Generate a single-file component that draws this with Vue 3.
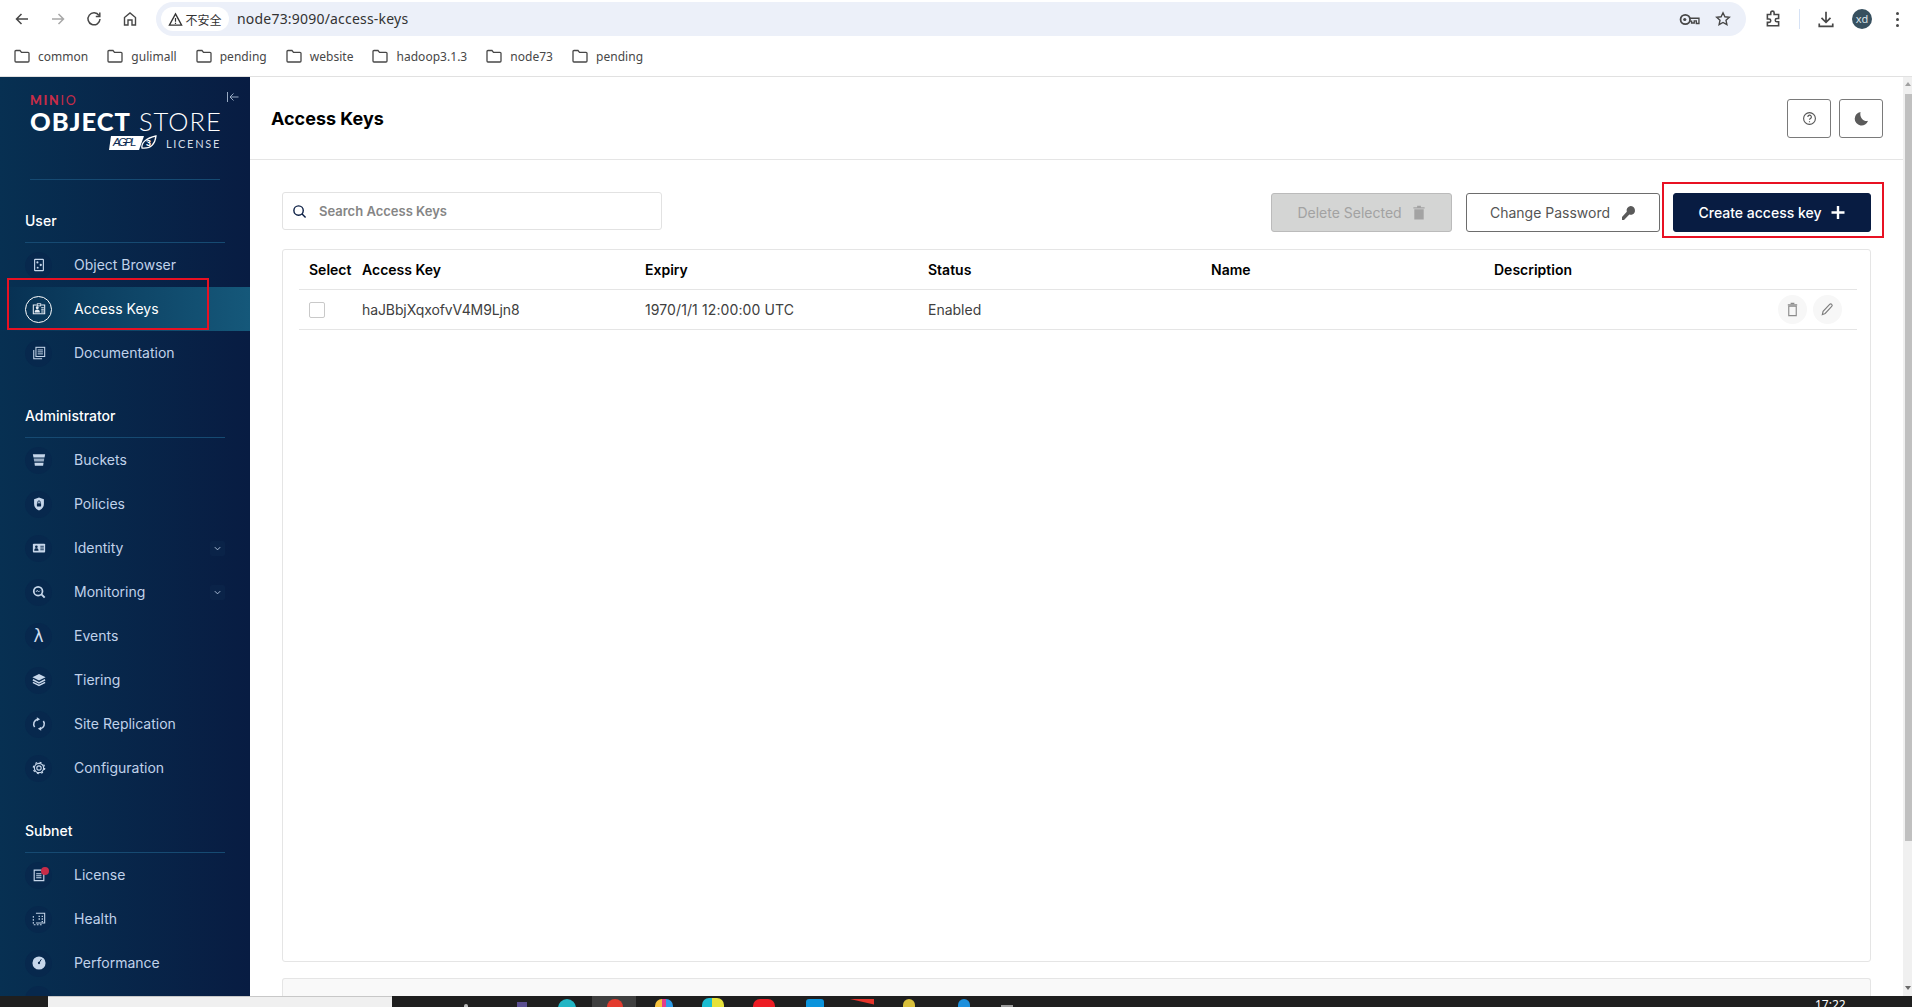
<script setup>
const bookmarks = ['common', 'gulimall', 'pending', 'website', 'hadoop3.1.3', 'node73', 'pending']

const I = {
  browser: '<rect x="3" y="1.5" width="10" height="13" rx=".6" fill="none" stroke="currentColor" stroke-width="1.3"/><circle cx="6.2" cy="5" r="1.2" fill="currentColor"/><circle cx="10" cy="8" r="1.3" fill="currentColor"/><circle cx="6.5" cy="11" r="1.1" fill="currentColor"/>',
  keys: '<path d="M5.5 3.5H1.5v10h13v-10h-4" fill="none" stroke="currentColor" stroke-width="1.2"/><circle cx="6" cy="6.6" r="1.7" fill="currentColor"/><path d="M3 12c0-2.6 1.2-3.4 3-3.4s3 .8 3 3.4z" fill="currentColor"/><path d="M10.5 6.5h3M10.5 9h3M10.5 11.4h3" stroke="currentColor" stroke-width="1.2"/><rect x="6" y="2" width="4" height="2.4" fill="none" stroke="currentColor"/>',
  docs: '<path d="M2 4.5v10h9.5" fill="none" stroke="currentColor" stroke-width="1.2"/><rect x="4.5" y="1.5" width="10" height="10.5" fill="none" stroke="currentColor" stroke-width="1.2"/><path d="M6.5 4.5h6M6.5 6.7h6M6.5 9h6" stroke="currentColor" stroke-width="1.1"/>',
  buckets: '<path d="M1 1.500h14l-.7 3.600H1.700z" fill="currentColor"/><path d="M2 6.300h12l-.5 3.400H2.500z" fill="currentColor" opacity=".75"/><path d="M2.800 11h10.400l-.5 3.500H3.300z" fill="currentColor"/>',
  policies: '<path d="M8 .5l5.600 2.200v5.300c0 3.600-2.600 6.200-5.600 7.500-3-1.300-5.600-3.900-5.600-7.500V2.700z" fill="currentColor"/><rect x="5.600" y="7" width="4.800" height="3.800" rx=".5" fill="#06264a"/><path d="M6.600 7V5.800a1.400 1.400 0 0 1 2.800 0V7" fill="none" stroke="#06264a"/>',
  identity: '<rect x="1" y="3" width="14" height="10" rx="1" fill="currentColor"/><circle cx="5" cy="6.500" r="1.500" fill="#06264a"/><path d="M2.500 11c0-2 1.100-2.700 2.500-2.700s2.500.7 2.500 2.700z" fill="#06264a"/><path d="M9.500 6h4M9.500 8h4M9.500 10h4" stroke="#06264a"/>',
  monitoring: '<circle cx="7" cy="7" r="5" fill="none" stroke="currentColor" stroke-width="2"/><path d="M10.500 10.500l4 4" stroke="currentColor" stroke-width="2.200"/><path d="M4.500 8l1.500-2 1.500 2 1.500-1.500" fill="none" stroke="currentColor"/>',
  tiering: '<path d="M8 1l7.500 3.800L8 8.600.5 4.800z" fill="currentColor"/><path d="M1 7.700l7 3.500 7-3.500" fill="none" stroke="currentColor" stroke-width="1.700"/><path d="M1 10.800l7 3.500 7-3.500" fill="none" stroke="currentColor" stroke-width="1.700"/>',
  replication: '<path d="M3 11.500A5.800 5.800 0 0 1 6.500 2.500M13 4.500a5.800 5.800 0 0 1-3.500 9" fill="none" stroke="currentColor" stroke-width="1.800"/><path d="M5.500 .3l3.800 2.200-3.800 2.400zM10.500 15.700l-3.800-2.200 3.800-2.400z" fill="currentColor"/>',
  config: '<circle cx="8" cy="8" r="5.300" fill="none" stroke="currentColor" stroke-width="1.300"/><circle cx="8" cy="8" r="6.500" fill="none" stroke="currentColor" stroke-width="1.400" stroke-dasharray="2.200 2.900"/><circle cx="8" cy="8" r="2.500" fill="none" stroke="currentColor" stroke-width="1.300"/>',
  license: '<path d="M2.500 2.500h8l3 3v9h-11z" fill="none" stroke="currentColor" stroke-width="1.300"/><path d="M4.800 6.500h6M4.800 8.800h6M4.800 11.100h6" stroke="currentColor" stroke-width="1.200"/>',
  health: '<path d="M4.500 1.500h10v11h-10" fill="none" stroke="currentColor" stroke-width="1.200"/><path d="M1.500 4.500v10h11" fill="none" stroke="currentColor" stroke-width="1.200" stroke-dasharray="2 1.500"/><path d="M7.500 5h1.500M11 5h1.500M7.500 8h1.500M11 8h1.500M11 11h1.500" stroke="currentColor" stroke-width="1.500"/>',
  performance: '<circle cx="8" cy="8" r="7.500" fill="currentColor"/><circle cx="8" cy="8" r="1.300" fill="#06264a"/><path d="M8.500 7l2.200-3.300" stroke="#06264a" stroke-width="1.100"/>'
}

const sections = [
  { title: 'User', items: [
    { label: 'Object Browser', icon: I.browser },
    { label: 'Access Keys', icon: I.keys, active: true },
    { label: 'Documentation', icon: I.docs }
  ] },
  { title: 'Administrator', items: [
    { label: 'Buckets', icon: I.buckets },
    { label: 'Policies', icon: I.policies },
    { label: 'Identity', icon: I.identity, more: true },
    { label: 'Monitoring', icon: I.monitoring, more: true },
    { label: 'Events', glyph: 'λ' },
    { label: 'Tiering', icon: I.tiering },
    { label: 'Site Replication', icon: I.replication },
    { label: 'Configuration', icon: I.config }
  ] },
  { title: 'Subnet', items: [
    { label: 'License', icon: I.license, dot: true },
    { label: 'Health', icon: I.health },
    { label: 'Performance', icon: I.performance }
  ] }
]

const columns = ['Access Key', 'Expiry', 'Status', 'Name', 'Description']
const row = ['haJBbjXqxofvV4M9Ljn8', '1970/1/1 12:00:00 UTC', 'Enabled', '', '']
const taskIcons = ['arrow', 'purple', 'teal', 'current', 'multi', 'multi2', 'red', 'blue', 'wedge', 'yellow', 'drop', 'gray']
</script>

<template>
  <div class="screen">
    <header class="chrome">
      <div class="toolbar">
        <div class="nav">
          <svg class="cicon" viewBox="0 0 16 16"><path d="M14 8H3M7.500 3L2.500 8l5 5" fill="none" stroke="#474747" stroke-width="1.500"/></svg>
          <svg class="cicon" viewBox="0 0 16 16"><path d="M2 8h11M8.500 3l5 5-5 5" fill="none" stroke="#a8a8a8" stroke-width="1.500"/></svg>
          <svg class="cicon" viewBox="0 0 16 16"><path d="M13 4.500A6 6 0 1 0 14 8" fill="none" stroke="#474747" stroke-width="1.500"/><path d="M13.800 1.500v4h-4" fill="none" stroke="#474747" stroke-width="1.500"/></svg>
          <svg class="cicon" viewBox="0 0 16 16"><path d="M2.500 14V6.500L8 2l5.500 4.500V14h-3.500V9H6v5z" fill="none" stroke="#474747" stroke-width="1.400"/></svg>
        </div>
        <div class="address">
          <div class="secure">
            <svg class="warn" viewBox="0 0 16 16"><path d="M8 2l6.500 12h-13z" fill="none" stroke="#333" stroke-width="1.400"/><path d="M8 6.500v4M8 11.500v1.200" stroke="#333" stroke-width="1.300"/></svg>
            <span>不安全</span>
          </div>
          <span class="url">node73:9090/access-keys</span>
          <div class="addr-end">
            <svg class="cicon key" viewBox="0 0 20 16"><circle cx="6" cy="8" r="4.500" fill="none" stroke="#474747" stroke-width="1.700"/><circle cx="5.500" cy="8" r="1.500" fill="#474747"/><path d="M10.500 6.800h8.500v5h-2.500v-2.500h-2v2h-2.500V9.500h-1.500" fill="none" stroke="#474747" stroke-width="1.300"/></svg>
            <svg class="cicon" viewBox="0 0 16 16"><path d="M8 1.800l1.900 4 4.400.5-3.300 3 .9 4.400L8 11.500l-3.900 2.200.9-4.400-3.300-3 4.400-.5z" fill="none" stroke="#474747" stroke-width="1.400"/></svg>
          </div>
        </div>
        <div class="tools">
          <svg class="cicon" viewBox="0 0 16 16"><path d="M3 4h3V2.500a1.500 1.500 0 0 1 3 0V4h4v3.500h-1.500a1.500 1.500 0 0 0 0 3H13V14H3v-3h1.500a1.500 1.500 0 0 0 0-3H3z" fill="none" stroke="#474747" stroke-width="1.400"/></svg>
          <span class="tool-sep"></span>
          <svg class="cicon" viewBox="0 0 16 16"><path d="M8 1.500v9M4 7l4 4 4-4M2 12v2.500h12V12" fill="none" stroke="#474747" stroke-width="1.500"/></svg>
          <span class="avatar">xd</span>
          <span class="dots"><i></i><i></i><i></i></span>
        </div>
      </div>
      <div class="bookmarks">
        <div v-for="(b, i) in bookmarks" :key="i" class="bookmark">
          <svg class="folder" viewBox="0 0 16 14"><path d="M1 2.500A1 1 0 0 1 2 1.500h4l1.500 1.800H14a1 1 0 0 1 1 1V12a1 1 0 0 1-1 1H2a1 1 0 0 1-1-1z" fill="none" stroke="#474747" stroke-width="1.300"/></svg>
          <span>{{ b }}</span>
        </div>
      </div>
    </header>

    <div class="page">
      <aside class="sidebar">
        <div class="brand">
          <div class="logo">
            <div class="minio"><b>MIN</b>IO</div>
            <div class="store"><b>OBJECT</b> STORE</div>
            <div class="lic">
              <svg class="agpl" viewBox="0 0 48 16">
                <path d="M2 1h33L30 15H0z" fill="#fff"/>
                <text x="4" y="11" font-family="Liberation Sans, sans-serif" font-style="italic" font-size="11" fill="#0a2a50" textLength="25">AGPL</text>
                <path d="M33 13c-1-5 4-10 14-12-1 8-5 13-14 12z" fill="none" stroke="#fff" stroke-width="1.300"/>
                <text x="37" y="11" font-family="Liberation Sans, sans-serif" font-weight="700" font-size="9" fill="#fff">3</text>
              </svg>
              <span>LICENSE</span>
            </div>
          </div>
          <svg class="collapse" viewBox="0 0 12 10"><path d="M.5 0v10M11.500 5H3M6.500 1.500L3 5l3.500 3.500" fill="none" stroke="#a9bad0" stroke-width=".9"/></svg>
        </div>

        <section v-for="s in sections" :key="s.title" class="group">
          <h3>{{ s.title }}</h3>
          <div v-for="item in s.items" :key="item.label" class="nav-row" :class="{ active: item.active }">
            <span class="ic">
              <svg v-if="item.icon" viewBox="0 0 16 16" v-html="item.icon"></svg>
              <span v-else class="lambda">{{ item.glyph }}</span>
              <i v-if="item.dot" class="dot"></i>
            </span>
            <span class="lbl">{{ item.label }}</span>
            <span v-if="item.more" class="more">
              <svg viewBox="0 0 10 10"><path d="M2 3.500l3 3 3-3" fill="none" stroke="#b9cbe3" stroke-width="1"/></svg>
            </span>
            <i v-if="item.active" class="mark mark-side"></i>
          </div>
        </section>
        <div class="nav-row clipped"><span class="ic"></span></div>
      </aside>

      <main class="content">
        <div class="head">
          <h1>Access Keys</h1>
          <div class="head-btns">
            <button class="sq">
              <svg viewBox="0 0 16 16"><circle cx="8" cy="8" r="6.300" fill="none" stroke="#555" stroke-width="1.200"/><path d="M6.200 6.300a1.900 1.900 0 1 1 2.800 1.700c-.7.400-1 .7-1 1.400M8 10.800v1.200" fill="none" stroke="#555" stroke-width="1.200"/></svg>
            </button>
            <button class="sq">
              <svg viewBox="0 0 16 16"><path d="M7 1a7.300 7.300 0 1 0 8 9.500C10.500 12 5.500 7 7 1z" fill="#5b5b5b"/></svg>
            </button>
          </div>
        </div>

        <div class="body">
          <div class="actions">
            <label class="search">
              <svg viewBox="0 0 16 16"><circle cx="7" cy="7" r="5" fill="none" stroke="#081c42" stroke-width="1.500"/><path d="M10.700 10.700L14.500 14.500" stroke="#081c42" stroke-width="1.500"/></svg>
              <span>Search Access Keys</span>
            </label>
            <div class="btns">
              <button class="btn disabled">Delete Selected
                <svg viewBox="0 0 14 16"><path d="M2 4.500h10V15.500H2zM1 2.300h12v1.300H1zM5 .8h4v1.500H5z" fill="#a3a3a3"/></svg>
              </button>
              <button class="btn outline">Change Password
                <svg class="pw" viewBox="0 0 16 16"><path d="M10.500 1a4.500 4.500 0 0 1 1.800 8.600 4.500 4.500 0 0 1-3-.2L4 15H2v-3l4.800-5.200A4.500 4.500 0 0 1 10.500 1z" fill="#5a5a5a"/></svg>
              </button>
              <button class="btn primary">Create access key
                <svg viewBox="0 0 14 14"><path d="M7 .5v13M.5 7h13" stroke="#fff" stroke-width="2.400"/></svg>
                <i class="mark mark-create"></i>
              </button>
            </div>
          </div>

          <div class="panel">
            <div class="t-row t-head">
              <div class="c-sel">Select</div>
              <div v-for="c in columns" :key="c" class="cell">{{ c }}</div>
            </div>
            <div class="t-row t-data">
              <div class="c-sel"><span class="check"></span></div>
              <div v-for="(c, i) in row" :key="i" class="cell">{{ c }}</div>
              <div class="row-btns">
                <span class="round"><svg viewBox="0 0 14 16"><path d="M3 4.500h8V14.500H3zM2 3h10M5 1.500h4" fill="none" stroke="#8b8b8b" stroke-width="1.200"/></svg></span>
                <span class="round"><svg viewBox="0 0 16 16"><path d="M2.500 13.500l.8-3.500 7-7.500a1.500 1.500 0 0 1 2.200 2.200l-7 7.500z" fill="none" stroke="#7d7d7d" stroke-width="1.200"/></svg></span>
              </div>
            </div>
          </div>
          <div class="panel-next"></div>
        </div>
      </main>

      <div class="scrollbar">
        <span class="arrow-up"></span>
        <span class="thumb"></span>
        <span class="arrow-down"></span>
      </div>
    </div>

    <footer class="taskbar">
      <span class="task-search"></span>
      <span v-for="t in taskIcons" :key="t" class="task" :class="t"></span>
      <span class="clock">17:22</span>
    </footer>
  </div>
</template>

<style>
html, body { margin: 0; overflow: hidden; background: #fff; }
</style>

<style scoped>
.screen { width: 1912px; height: 1007px; display: flex; flex-direction: column; overflow: hidden; font-family: Inter, "Liberation Sans", sans-serif; font-size: 14px; color: #404040; }
.chrome { height: 77px; box-sizing: border-box; border-bottom: 1px solid #e1e1e1; flex: none; background: #fff; }
.toolbar { height: 38px; display: flex; align-items: center; box-sizing: border-box; }
.nav { width: 156px; padding-left: 14px; padding-bottom: 1px; box-sizing: border-box; display: flex; gap: 20px; flex: none; }
.cicon { width: 16px; height: 16px; display: block; }
.address { width: 1590px; height: 34px; border-radius: 17px; background: #ecf0f9; display: flex; align-items: center; box-sizing: border-box; padding: 0 15px 0 5px; flex: none; }
.secure { width: 68px; height: 24px; border-radius: 12px; background: #fff; display: flex; align-items: center; justify-content: center; gap: 2px; font: 12px "Noto Sans CJK SC", sans-serif; color: #333; flex: none; }
.warn { width: 15px; height: 15px; }
.url { margin-left: 8px; padding-bottom: 1px; font: 14px "Noto Sans", sans-serif; color: #333; letter-spacing: .2px; }
.addr-end { margin-left: auto; display: flex; gap: 15px; align-items: center; }
.addr-end .key { width: 21px; height: 17px; }
.tools { display: flex; align-items: center; flex: 1; padding-left: 18px; }
.tools .cicon { width: 18px; height: 18px; }
.tool-sep { width: 1px; height: 20px; background: #d6e2f5; margin: 0 17px; }
.avatar { width: 20px; height: 20px; border-radius: 50%; background: #37505f; color: #dbe4ea; font: 11px/20px "Noto Sans", sans-serif; text-align: center; margin-left: 17px; }
.dots { display: flex; flex-direction: column; gap: 3px; margin-left: 24px; }
.dots i { width: 3px; height: 3px; border-radius: 50%; background: #474747; display: block; }
.bookmarks { height: 38px; box-sizing: border-box; display: flex; align-items: center; padding: 0 0 2px 14px; gap: 19px; }
.bookmark { display: flex; align-items: center; gap: 8px; font: 12px "Noto Sans", sans-serif; letter-spacing: .03px; color: #474747; }
.folder { width: 16px; height: 14px; }

.page { flex: 1; min-height: 0; display: flex; }
.sidebar { width: 250px; flex: none; overflow: hidden; background: linear-gradient(90deg, #073052 0%, #081c42 100%); position: relative; }
.brand { height: 102px; margin: 0 30px; border-bottom: 1px solid #164a72; position: relative; }
.logo { padding-top: 19px; width: 190px; color: #fff; font-family: Lato, sans-serif; }
.minio { color: #c72c48; font-size: 12.500px; line-height: 9px; letter-spacing: 1.700px; font-weight: 400; }
.minio b { font-weight: 900; }
.store { font-size: 25.500px; line-height: 26px; font-weight: 300; letter-spacing: 1px; white-space: nowrap; margin-top: 3px; }
.store b { font-weight: 900; }
.lic { display: flex; justify-content: flex-end; align-items: center; gap: 9px; margin-top: 1px; font-size: 11px; letter-spacing: 1.700px; color: #d4dce8; margin-right: -1px; }
.agpl { width: 48px; height: 16px; }
.collapse { position: absolute; left: 197px; top: 15px; width: 12px; height: 10px; }

.group h3 { margin: 0 25px; padding: 32px 0 13px; height: 17px; box-sizing: content-box; font-size: 14px; line-height: 17px; font-weight: 500; color: #fff; border-bottom: 1px solid #164a72; }
.nav-row { height: 44px; display: flex; align-items: center; padding: 0 25px; position: relative; }
.nav-row.active { background: linear-gradient(90deg, #073052 0%, #15587a 100%); }
.ic { width: 27px; height: 27px; border-radius: 50%; background: #07284d; color: #c6d6ea; display: flex; align-items: center; justify-content: center; position: relative; flex: none; box-sizing: border-box; }
.ic svg { width: 14px; height: 14px; display: block; }
.active .ic { background: transparent; border: 1px solid #fff; color: #e6edf5; }
.lambda { font: 17px/1 "DejaVu Sans", sans-serif; color: #d0ddee; }
.dot { position: absolute; top: 5px; right: 3px; width: 8px; height: 8px; border-radius: 50%; background: #c72c48; }
.lbl { margin-left: 22px; padding-bottom: 2px; font-weight: 400; color: #c0d2ea; font-size: 14px; }
.active .lbl { color: #fff; }
.more { margin-left: auto; width: 15px; height: 15px; background: #0a2348; border-radius: 2px; display: flex; align-items: center; justify-content: center; }
.more svg { width: 9px; height: 9px; }
.mark { position: absolute; border: 2px solid #e81123; box-sizing: border-box; pointer-events: none; }
.mark-side { left: 7px; top: -9px; width: 202px; height: 52px; }
.mark-create { left: -12px; top: -12px; width: 222px; height: 56px; }
.clipped { margin-top: -8px; }

.content { flex: 1; min-width: 0; display: flex; flex-direction: column; }
.head { height: 83px; box-sizing: border-box; border-bottom: 1px solid #e5e5e5; display: flex; align-items: center; justify-content: space-between; padding: 0 20px 0 21px; flex: none; }
h1 { margin: 0; font-size: 18px; font-weight: 700; color: #000; }
.head-btns { display: flex; gap: 8px; }
.sq { width: 44px; height: 39px; border: 1px solid #7a7a7a; border-radius: 3px; background: #fff; display: flex; align-items: center; justify-content: center; padding: 0; }
.sq svg { width: 15px; height: 15px; }
.body { flex: 1; min-height: 0; padding: 32px 32px 0; display: flex; flex-direction: column; overflow: hidden; }
.actions { display: flex; justify-content: space-between; align-items: center; height: 40px; flex: none; }
.search { width: 380px; height: 38px; box-sizing: border-box; border: 1px solid #e2e2e2; border-radius: 3px; display: flex; align-items: center; padding-left: 9px; gap: 12px; font-size: 13px; font-weight: 600; color: #858585; margin-top: -2px; }
.search svg { width: 15px; height: 15px; }
.btns { display: flex; gap: 13px; margin-top: 1px; }
.btn { height: 39px; box-sizing: border-box; border-radius: 3px; font: 400 14px Inter, sans-serif; display: flex; align-items: center; justify-content: center; gap: 10px; padding: 0; position: relative; }
.btn svg { width: 14px; height: 15px; }
.btn .pw { width: 16px; height: 16px; }
.disabled { width: 181px; margin-right: 1px; background: #d4d5d4; border: 1px solid #bbb; color: #a2a2a2; }
.outline { width: 194px; background: #fff; border: 1px solid #6d6d6d; color: #555; }
.primary { width: 198px; background: #081c42; border: 1px solid #081c42; color: #fff; font-weight: 500; }
.panel { margin-top: 17px; height: 713px; flex: none; box-sizing: border-box; border: 1px solid #e5e5e5; border-radius: 3px; padding: 0 13px 0 16px; }
.t-row { height: 40px; box-sizing: border-box; border-bottom: 1px solid #e5e5e5; display: grid; grid-template-columns: 63px 283px 283px 283px 283px 1fr; align-items: center; position: relative; }
.t-head { font-weight: 600; color: #000; }
.t-data .cell:nth-child(2) { letter-spacing: -.1px; }
.t-data .cell:nth-child(3) { letter-spacing: .1px; }
.c-sel { padding-left: 10px; }
.check { display: block; width: 16px; height: 16px; box-sizing: border-box; border: 1px solid #c9c9c9; border-radius: 2px; background: #fff; }
.row-btns { position: absolute; right: 15px; top: 5px; display: flex; gap: 6px; }
.round { width: 29px; height: 29px; border-radius: 50%; background: #f7f7f7; display: flex; align-items: center; justify-content: center; }
.round svg { width: 15px; height: 15px; }
.panel-next { margin-top: 16px; flex: 1; border: 1px solid #e5e5e5; border-bottom: 0; border-radius: 3px 3px 0 0; background: #f9f9f9; }

.scrollbar { width: 9px; flex: none; background: #f0f0f0; position: relative; }
.thumb { position: absolute; left: 2px; right: 0; top: 17px; height: 747px; background: #c0c0c0; }
.arrow-up, .arrow-down { position: absolute; left: 2px; width: 0; height: 0; border-left: 3.500px solid transparent; border-right: 3.500px solid transparent; }
.arrow-up { top: 5px; border-bottom: 4px solid #a0a0a0; }
.arrow-down { bottom: 6px; border-top: 4px solid #6a6a6a; }

.taskbar { height: 11px; flex: none; background: #1f1f1f; display: flex; align-items: flex-start; overflow: hidden; position: relative; }
.task-search { width: 344px; height: 11px; margin-left: 48px; background: #f0f0f0; border-top: 1px solid #c8c8c8; box-sizing: border-box; flex: none; }
.task { flex: none; display: block; height: 14px; border-radius: 7px 7px 0 0; }
.arrow { width: 4px; height: 4px; margin: 8px 0 0 72px; background: #bbb; }
.purple { width: 10px; height: 5px; margin: 6px 0 0 49px; background: #5a4e90; border-radius: 0; }
.teal { width: 18px; margin: 3px 0 0 31px; background: #21b5c4; border-radius: 9px 9px 0 0; }
.current { width: 44px; height: 11px; margin-left: 16px; background: #3f3f3f; border-radius: 0; position: relative; }
.current::after { content: ""; position: absolute; left: 15px; top: 3px; width: 16px; height: 16px; border-radius: 50%; background: #e33b2e; }
.multi { width: 18px; margin: 3px 0 0 19px; background: linear-gradient(90deg, #f6c23c 0 40%, #e23d8c 40% 60%, #2d9ce8 60%); }
.multi2 { width: 22px; margin: 2px 0 0 29px; background: linear-gradient(90deg, #19bcd1 0 45%, #e6e23a 45%); }
.red { width: 22px; margin: 3px 0 0 29px; background: #ed1c24; }
.blue { width: 18px; margin: 3px 0 0 31px; background: #0a93dc; border-radius: 3px 3px 0 0; }
.wedge { width: 24px; margin: 3px 0 0 26px; background: #e6332a; border-radius: 0; clip-path: polygon(0 0, 100% 0, 100% 40%); }
.yellow { width: 12px; margin: 3px 0 0 29px; background: #d8bf3a; }
.drop { width: 12px; margin: 3px 0 0 43px; background: #1c8fdc; }
.gray { width: 12px; height: 2px; margin: 9px 0 0 31px; background: #9a9a9a; border-radius: 0; }
.clock { position: absolute; left: 1815px; top: 1px; color: #fff; font: 12px/16px "Noto Sans", sans-serif; }
</style>
